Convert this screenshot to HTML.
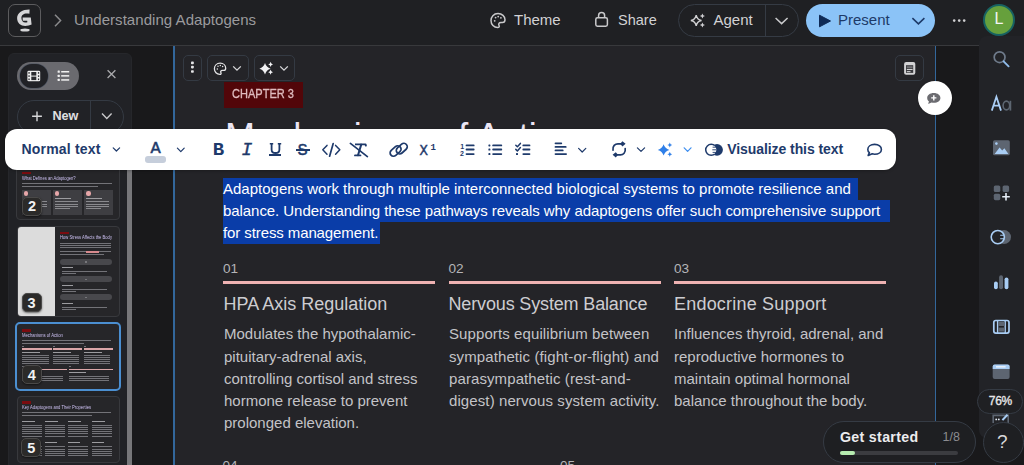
<!DOCTYPE html>
<html><head><meta charset="utf-8">
<style>
*{box-sizing:border-box;margin:0;padding:0}
html,body{width:1024px;height:465px;overflow:hidden;background:#19191b;font-family:"Liberation Sans",sans-serif}
.a{position:absolute}
svg{position:absolute;overflow:visible}
.t{white-space:nowrap;position:absolute}
</style></head><body>

<!-- top bar -->
<div class="a" style="left:0;top:0;width:1024px;height:46px;background:#1f2023"></div>
<div class="a" style="left:0;top:44.8px;width:1024px;height:1.4px;background:#38393c"></div>

<!-- logo -->
<div class="a" style="left:8px;top:4px;width:33px;height:33px;border:1.5px solid #5c5c5e;border-radius:7px"></div>
<svg style="left:0;top:0" width="60" height="45">
  <path d="M29.6 9.4 C23.2 9.2 17.1 12.2 17.1 18 C17.1 23.2 20.8 26 25.2 26 C27.6 26 29.8 25.4 31.6 24.6 L30.8 17.6 L22.6 17.6 L22.8 20.8 L27.2 20.8 L27.4 22.2 C26.8 22.4 26 22.5 25.2 22.5 C23 22.5 21.4 20.6 21.4 18 C21.4 15 23.6 13.4 26.6 13.4 C27.6 13.4 28.6 13.6 29.4 13.8 Z" fill="#d6d6d8"/>
  <ellipse cx="25" cy="30" rx="4.7" ry="1.5" fill="#d6d6d8"/>
  <path d="M55 14.8 L60.6 20.5 L55 26.2" stroke="#8a8a8c" stroke-width="1.5" fill="none"/>
</svg>
<div class="t" style="left:74px;top:11px;font-size:15px;color:#9b9b9e;letter-spacing:0.05px">Understanding Adaptogens</div>

<!-- Theme -->
<svg style="left:0;top:0" width="1024" height="45">
  <!-- palette -->
  <path d="M498 13.6 C493.6 13.6 491 16.8 491 20.6 C491 24.6 494 27.6 497.6 27.6 C499.2 27.6 499.6 26.6 499 25.4 C498.2 23.8 499.2 22.6 500.8 22.6 L502.4 22.6 C504.2 22.6 505 21.4 505 19.8 C505 16.2 502 13.6 498 13.6 Z" stroke="#c9c9cb" stroke-width="1.5" fill="none"/>
  <circle cx="494.7" cy="20.8" r="0.9" fill="#c9c9cb"/><circle cx="495.6" cy="17.6" r="0.9" fill="#c9c9cb"/>
  <circle cx="498.2" cy="16.6" r="0.9" fill="#c9c9cb"/><circle cx="500.9" cy="17.8" r="0.9" fill="#c9c9cb"/>
  <!-- lock -->
  <rect x="595.8" y="17.8" width="11.6" height="8.4" rx="1.6" stroke="#c9c9cb" stroke-width="1.5" fill="none"/>
  <path d="M598.6 17.8 V15.4 C598.6 13.6 599.8 12.6 601.6 12.6 C603.4 12.6 604.6 13.6 604.6 15.4 V17.8" stroke="#c9c9cb" stroke-width="1.5" fill="none"/>
  <!-- sparkle agent -->
  <path d="M696.2 15.2 Q697 19.7 701.5 20.5 Q697 21.3 696.2 25.8 Q695.4 21.3 690.9 20.5 Q695.4 19.7 696.2 15.2 Z" stroke="#d0d0d2" stroke-width="1.4" fill="none"/>
  <path d="M702.4 13.4 Q702.8 15.6 705 16 Q702.8 16.4 702.4 18.6 Q702 16.4 699.8 16 Q702 15.6 702.4 13.4 Z" fill="#d0d0d2"/>
  <path d="M702.4 22.4 Q702.8 24.6 705 25 Q702.8 25.4 702.4 27.6 Q702 25.4 699.8 25 Q702 24.6 702.4 22.4 Z" fill="#d0d0d2"/>
  <!-- agent chevron -->
  <path d="M775.6 18 L781.6 23.6 L787.6 18" stroke="#c9c9cb" stroke-width="1.5" fill="none"/>
</svg>
<div class="t" style="left:514px;top:11px;font-size:15px;color:#d2d2d4">Theme</div>
<div class="t" style="left:618px;top:11.6px;font-size:14.5px;color:#d2d2d4">Share</div>

<!-- Agent pill -->
<div class="a" style="left:678px;top:4px;width:121px;height:33px;border:1px solid #353b44;border-radius:17px"></div>
<div class="a" style="left:765px;top:5px;width:1px;height:31px;background:#353b44"></div>
<div class="t" style="left:713.5px;top:11px;font-size:15px;color:#d2d2d4">Agent</div>

<!-- Present -->
<div class="a" style="left:806px;top:4px;width:129px;height:33px;background:#8bc3f7;border-radius:17px"></div>
<svg style="left:0;top:0" width="1024" height="45">
  <path d="M819.5 15.2 L830.5 21 L819.5 26.8 Z" fill="#0f2a55" stroke="#0f2a55" stroke-width="1" stroke-linejoin="round"/>
  <path d="M912.4 18.2 L918.4 23.8 L924.4 18.2" stroke="#1d3a68" stroke-width="1.6" fill="none"/>
  <circle cx="954.2" cy="20.6" r="1.3" fill="#d0d0d2"/><circle cx="959.2" cy="20.6" r="1.3" fill="#d0d0d2"/><circle cx="964.2" cy="20.6" r="1.3" fill="#d0d0d2"/>
</svg>
<div class="t" style="left:838px;top:11px;font-size:15px;color:#1d3a68">Present</div>

<!-- avatar -->
<div class="a" style="left:983px;top:4px;width:32px;height:32px;border-radius:50%;background:#66a03c;border:2px solid #176262"></div>
<div class="t" style="left:994.4px;top:10.4px;font-size:16px;color:#f4f4f4">L</div>

<!-- right sidebar panel -->
<div class="a" style="left:979px;top:36px;width:60px;height:402px;background:#222327;border-radius:8px"></div>

<!-- left sidebar panel -->
<div class="a" style="left:8px;top:53px;width:124px;height:430px;background:#212226;border:1px solid #26272b;border-radius:6px"></div>


<!-- sidebar toggle -->
<div class="a" style="left:17px;top:62px;width:62px;height:28px;border-radius:14px;background:#6a6a6f"></div>
<div class="a" style="left:19.6px;top:64px;width:28.2px;height:24px;border-radius:12px;background:#212226;box-shadow:0 0 0 0.6px #4a5260"></div>
<svg style="left:0;top:0" width="140" height="140">
 <rect x="27.4" y="70.8" width="12.8" height="10.5" rx="1.3" fill="#f0f0f0"/>
 <rect x="31.3" y="72" width="5" height="3.6" fill="#2a2b2f"/>
 <rect x="31.3" y="76.6" width="5" height="3.5" fill="#2a2b2f"/>
 <rect x="28.4" y="72.1" width="1.3" height="1.6" fill="#2a2b2f"/><rect x="28.4" y="75.3" width="1.3" height="1.6" fill="#2a2b2f"/><rect x="28.4" y="78.5" width="1.3" height="1.6" fill="#2a2b2f"/>
 <rect x="37.9" y="72.1" width="1.3" height="1.6" fill="#2a2b2f"/><rect x="37.9" y="75.3" width="1.3" height="1.6" fill="#2a2b2f"/><rect x="37.9" y="78.5" width="1.3" height="1.6" fill="#2a2b2f"/>
 <rect x="57.6" y="70.6" width="2.2" height="2.2" rx="0.5" fill="#f0f0f0"/>
 <rect x="57.6" y="74.7" width="2.2" height="2.2" rx="0.5" fill="#f0f0f0"/>
 <rect x="57.6" y="78.8" width="2.2" height="2.2" rx="0.5" fill="#f0f0f0"/>
 <rect x="61.2" y="71" width="8" height="1.5" fill="#f0f0f0"/>
 <rect x="61.2" y="75.1" width="8" height="1.5" fill="#f0f0f0"/>
 <rect x="61.2" y="79.2" width="8" height="1.5" fill="#f0f0f0"/>
 <path d="M107.6 70.2 L115.4 78 M115.4 70.2 L107.6 78" stroke="#a9a9ac" stroke-width="1.3"/>
 <path d="M37 111.4 V121.2 M32.1 116.3 H41.9" stroke="#d8d8da" stroke-width="1.4"/>
 <path d="M102 113.6 L106.8 118.4 L111.6 113.6" stroke="#c9c9cb" stroke-width="1.4" fill="none"/>
</svg>
<div class="a" style="left:17px;top:100px;width:106.5px;height:34px;border:1px solid #343a43;border-radius:17px"></div>
<div class="a" style="left:90px;top:100px;width:1px;height:34px;background:#343a43"></div>
<div class="t" style="left:52.5px;top:108.6px;font-size:12.6px;font-weight:700;color:#e0e0e2">New</div>
<!-- thumbs start -->
<!-- scrollbar -->
<div class="a" style="left:126.6px;top:130px;width:5px;height:340px;background:#77777a"></div>
<div class="a" style="left:16.0px;top:164.0px;width:103.5px;height:55.5px;background:#262629;border:1px solid #38393d;border-radius:4px"></div>
<div class="a" style="left:16.5px;top:226.0px;width:103.0px;height:91.0px;background:#262629;border:1px solid #38393d;border-radius:4px"></div>
<div class="a" style="left:17.5px;top:227.0px;width:37.3px;height:89.0px;background:#dcdcdc;border-radius:3px 0 0 3px"></div>
<div class="a" style="left:15.2px;top:322.4px;width:105.7px;height:68.2px;background:#262629;border:2px solid #4b8fd1;border-radius:5px"></div>
<div class="a" style="left:16.5px;top:395.6px;width:103.2px;height:67.0px;background:#262629;border:1px solid #38393d;border-radius:4px"></div>
<div class="a" style="left:0;top:0;width:140px;height:465px;filter:blur(0.45px)">
<div class="a" style="left:22.0px;top:171.7px;width:9.0px;height:2.8px;background:#7a0c10;"></div>
<div class="t" style="left:22.4px;top:175px;font-size:5.9px;line-height:6.9px;color:#cbbff0;transform:scaleX(0.7);transform-origin:0 0;">What Defines an Adaptogen?</div>
<div class="a" style="left:22.4px;top:182.6px;width:89.6px;height:1.1px;background:#737378;"></div>
<div class="a" style="left:22.4px;top:185.6px;width:76.0px;height:1.1px;background:#737378;"></div>
<div class="a" style="left:22.0px;top:190.0px;width:29.0px;height:24.6px;background:#3e3e42;"></div>
<div class="a" style="left:24.2px;top:191.4px;width:4.2px;height:4.2px;background:#e6a6a8;border-radius:50%"></div>
<div class="a" style="left:24.0px;top:197.8px;width:16.0px;height:1.2px;background:#9c9ca0;"></div>
<div class="a" style="left:24.0px;top:201.4px;width:23.0px;height:0.9px;background:#8a8a8e;"></div>
<div class="a" style="left:24.0px;top:203.6px;width:23.0px;height:0.9px;background:#8a8a8e;"></div>
<div class="a" style="left:24.0px;top:205.8px;width:23.0px;height:0.9px;background:#8a8a8e;"></div>
<div class="a" style="left:24.0px;top:208.0px;width:15.0px;height:0.9px;background:#8a8a8e;"></div>
<div class="a" style="left:53.0px;top:190.0px;width:29.0px;height:24.6px;background:#3e3e42;"></div>
<div class="a" style="left:55.2px;top:191.4px;width:4.2px;height:4.2px;background:#e6a6a8;border-radius:50%"></div>
<div class="a" style="left:55.0px;top:197.8px;width:16.0px;height:1.2px;background:#9c9ca0;"></div>
<div class="a" style="left:55.0px;top:201.4px;width:23.0px;height:0.9px;background:#8a8a8e;"></div>
<div class="a" style="left:55.0px;top:203.6px;width:23.0px;height:0.9px;background:#8a8a8e;"></div>
<div class="a" style="left:55.0px;top:205.8px;width:23.0px;height:0.9px;background:#8a8a8e;"></div>
<div class="a" style="left:55.0px;top:208.0px;width:15.0px;height:0.9px;background:#8a8a8e;"></div>
<div class="a" style="left:84.2px;top:190.0px;width:29.0px;height:24.6px;background:#3e3e42;"></div>
<div class="a" style="left:86.4px;top:191.4px;width:4.2px;height:4.2px;background:#e6a6a8;border-radius:50%"></div>
<div class="a" style="left:86.2px;top:197.8px;width:16.0px;height:1.2px;background:#9c9ca0;"></div>
<div class="a" style="left:86.2px;top:201.4px;width:23.0px;height:0.9px;background:#8a8a8e;"></div>
<div class="a" style="left:86.2px;top:203.6px;width:23.0px;height:0.9px;background:#8a8a8e;"></div>
<div class="a" style="left:86.2px;top:205.8px;width:23.0px;height:0.9px;background:#8a8a8e;"></div>
<div class="a" style="left:86.2px;top:208.0px;width:15.0px;height:0.9px;background:#8a8a8e;"></div>
<div class="a" style="left:60.2px;top:231.8px;width:9.2px;height:2.4px;background:#7a0c10;"></div>
<div class="t" style="left:60.2px;top:234.2px;font-size:5.9px;line-height:6.9px;color:#cbbff0;transform:scaleX(0.7);transform-origin:0 0;">How Stress Affects the Body</div>
<div class="a" style="left:60.2px;top:242.6px;width:51.0px;height:1.0px;background:#737378;"></div>
<div class="a" style="left:60.2px;top:245.0px;width:51.0px;height:1.0px;background:#737378;"></div>
<div class="a" style="left:60.2px;top:247.4px;width:51.0px;height:1.0px;background:#737378;"></div>
<div class="a" style="left:60.2px;top:251.0px;width:51.0px;height:1.0px;background:#737378;"></div>
<div class="a" style="left:85.7px;top:250.5px;width:13.3px;height:2.0px;background:#d88a8e;"></div>
<div class="a" style="left:60.2px;top:253.6px;width:44.0px;height:1.0px;background:#737378;"></div>
<div class="a" style="left:60.0px;top:258.7px;width:52.0px;height:6.1px;background:#48484c;border-radius:3px"></div>
<div class="a" style="left:84.5px;top:261.0px;width:2.5px;height:1.5px;background:#77777b;"></div>
<div class="a" style="left:61.5px;top:266.8px;width:11.0px;height:1.2px;background:#9c9ca0;"></div>
<div class="a" style="left:61.5px;top:270.8px;width:45.0px;height:0.9px;background:#737378;"></div>
<div class="a" style="left:61.5px;top:273.0px;width:14.0px;height:0.9px;background:#737378;"></div>
<div class="a" style="left:60.0px;top:276.4px;width:52.0px;height:6.1px;background:#48484c;border-radius:3px"></div>
<div class="a" style="left:84.5px;top:278.7px;width:2.5px;height:1.5px;background:#77777b;"></div>
<div class="a" style="left:61.5px;top:284.6px;width:11.0px;height:1.2px;background:#9c9ca0;"></div>
<div class="a" style="left:61.5px;top:288.6px;width:45.0px;height:0.9px;background:#737378;"></div>
<div class="a" style="left:61.5px;top:290.8px;width:14.0px;height:0.9px;background:#737378;"></div>
<div class="a" style="left:60.0px;top:294.4px;width:52.0px;height:6.1px;background:#48484c;border-radius:3px"></div>
<div class="a" style="left:84.5px;top:296.7px;width:2.5px;height:1.5px;background:#77777b;"></div>
<div class="a" style="left:61.5px;top:302.6px;width:11.0px;height:1.2px;background:#9c9ca0;"></div>
<div class="a" style="left:61.5px;top:306.6px;width:45.0px;height:0.9px;background:#737378;"></div>
<div class="a" style="left:61.5px;top:308.8px;width:14.0px;height:0.9px;background:#737378;"></div>
<div class="a" style="left:22.0px;top:328.9px;width:9.4px;height:2.8px;background:#7a0c10;"></div>
<div class="t" style="left:22px;top:332px;font-size:6px;line-height:7px;color:#cbbff0;transform:scaleX(0.7);transform-origin:0 0;">Mechanisms of Action</div>
<div class="a" style="left:22.0px;top:340.4px;width:89.0px;height:1.0px;background:#737378;"></div>
<div class="a" style="left:22.0px;top:343.2px;width:62.0px;height:1.0px;background:#737378;"></div>
<div class="a" style="left:22.0px;top:346.2px;width:2.0px;height:0.9px;background:#737378;"></div>
<div class="a" style="left:22.0px;top:348.3px;width:29.5px;height:1.5px;background:#dba6a8;"></div>
<div class="a" style="left:22.0px;top:351.6px;width:18.3px;height:1.1px;background:#9c9ca0;"></div>
<div class="a" style="left:22.0px;top:354.8px;width:26.5px;height:0.9px;background:#737378;"></div>
<div class="a" style="left:22.0px;top:357.0px;width:26.5px;height:0.9px;background:#737378;"></div>
<div class="a" style="left:22.0px;top:359.2px;width:26.5px;height:0.9px;background:#737378;"></div>
<div class="a" style="left:22.0px;top:361.4px;width:26.5px;height:0.9px;background:#737378;"></div>
<div class="a" style="left:22.0px;top:363.4px;width:26.5px;height:0.9px;background:#737378;"></div>
<div class="a" style="left:53.1px;top:346.2px;width:2.0px;height:0.9px;background:#737378;"></div>
<div class="a" style="left:53.1px;top:348.3px;width:29.1px;height:1.5px;background:#dba6a8;"></div>
<div class="a" style="left:53.1px;top:351.6px;width:18.0px;height:1.1px;background:#9c9ca0;"></div>
<div class="a" style="left:53.1px;top:354.8px;width:26.1px;height:0.9px;background:#737378;"></div>
<div class="a" style="left:53.1px;top:357.0px;width:26.1px;height:0.9px;background:#737378;"></div>
<div class="a" style="left:53.1px;top:359.2px;width:26.1px;height:0.9px;background:#737378;"></div>
<div class="a" style="left:53.1px;top:361.4px;width:26.1px;height:0.9px;background:#737378;"></div>
<div class="a" style="left:53.1px;top:363.4px;width:26.1px;height:0.9px;background:#737378;"></div>
<div class="a" style="left:83.8px;top:346.2px;width:2.0px;height:0.9px;background:#737378;"></div>
<div class="a" style="left:83.8px;top:348.3px;width:29.0px;height:1.5px;background:#dba6a8;"></div>
<div class="a" style="left:83.8px;top:351.6px;width:18.0px;height:1.1px;background:#9c9ca0;"></div>
<div class="a" style="left:83.8px;top:354.8px;width:26.0px;height:0.9px;background:#737378;"></div>
<div class="a" style="left:83.8px;top:357.0px;width:26.0px;height:0.9px;background:#737378;"></div>
<div class="a" style="left:83.8px;top:359.2px;width:26.0px;height:0.9px;background:#737378;"></div>
<div class="a" style="left:83.8px;top:361.4px;width:26.0px;height:0.9px;background:#737378;"></div>
<div class="a" style="left:83.8px;top:363.4px;width:26.0px;height:0.9px;background:#737378;"></div>
<div class="a" style="left:22.0px;top:366.4px;width:2.0px;height:0.9px;background:#737378;"></div>
<div class="a" style="left:22.0px;top:368.5px;width:44.8px;height:1.5px;background:#dba6a8;"></div>
<div class="a" style="left:22.0px;top:372.0px;width:17.9px;height:1.1px;background:#9c9ca0;"></div>
<div class="a" style="left:22.0px;top:375.6px;width:40.8px;height:0.9px;background:#737378;"></div>
<div class="a" style="left:22.0px;top:377.8px;width:40.8px;height:0.9px;background:#737378;"></div>
<div class="a" style="left:22.0px;top:380.0px;width:40.8px;height:0.9px;background:#737378;"></div>
<div class="a" style="left:68.5px;top:366.4px;width:2.0px;height:0.9px;background:#737378;"></div>
<div class="a" style="left:68.5px;top:368.5px;width:44.3px;height:1.5px;background:#dba6a8;"></div>
<div class="a" style="left:68.5px;top:372.0px;width:17.7px;height:1.1px;background:#9c9ca0;"></div>
<div class="a" style="left:68.5px;top:375.6px;width:40.3px;height:0.9px;background:#737378;"></div>
<div class="a" style="left:68.5px;top:377.8px;width:40.3px;height:0.9px;background:#737378;"></div>
<div class="a" style="left:68.5px;top:380.0px;width:40.3px;height:0.9px;background:#737378;"></div>
<div class="a" style="left:22.0px;top:401.0px;width:9.4px;height:2.7px;background:#7a0c10;"></div>
<div class="t" style="left:22px;top:404px;font-size:6px;line-height:7px;color:#cbbff0;transform:scaleX(0.693);transform-origin:0 0;">Key Adaptogens and Their Properties</div>
<div class="a" style="left:22.0px;top:412.4px;width:89.0px;height:1.0px;background:#737378;"></div>
<div class="a" style="left:22.0px;top:415.0px;width:70.0px;height:1.0px;background:#737378;"></div>
<div class="a" style="left:22.0px;top:421.0px;width:13.0px;height:1.2px;background:#9c9ca0;"></div>
<div class="a" style="left:22.0px;top:424.6px;width:20.0px;height:0.9px;background:#737378;"></div>
<div class="a" style="left:22.0px;top:426.8px;width:20.0px;height:0.9px;background:#737378;"></div>
<div class="a" style="left:22.0px;top:429.0px;width:20.0px;height:0.9px;background:#737378;"></div>
<div class="a" style="left:22.0px;top:431.2px;width:20.0px;height:0.9px;background:#737378;"></div>
<div class="a" style="left:22.0px;top:433.4px;width:20.0px;height:0.9px;background:#737378;"></div>
<div class="a" style="left:22.0px;top:435.6px;width:20.0px;height:0.9px;background:#737378;"></div>
<div class="a" style="left:22.0px;top:442.0px;width:12.0px;height:1.2px;background:#9c9ca0;"></div>
<div class="a" style="left:22.0px;top:446.4px;width:20.0px;height:0.9px;background:#737378;"></div>
<div class="a" style="left:22.0px;top:448.6px;width:20.0px;height:0.9px;background:#737378;"></div>
<div class="a" style="left:22.0px;top:450.8px;width:20.0px;height:0.9px;background:#737378;"></div>
<div class="a" style="left:22.0px;top:453.0px;width:20.0px;height:0.9px;background:#737378;"></div>
<div class="a" style="left:22.0px;top:455.2px;width:20.0px;height:0.9px;background:#737378;"></div>
<div class="a" style="left:45.0px;top:421.0px;width:13.0px;height:1.2px;background:#9c9ca0;"></div>
<div class="a" style="left:45.0px;top:424.6px;width:20.0px;height:0.9px;background:#737378;"></div>
<div class="a" style="left:45.0px;top:426.8px;width:20.0px;height:0.9px;background:#737378;"></div>
<div class="a" style="left:45.0px;top:429.0px;width:20.0px;height:0.9px;background:#737378;"></div>
<div class="a" style="left:45.0px;top:431.2px;width:20.0px;height:0.9px;background:#737378;"></div>
<div class="a" style="left:45.0px;top:433.4px;width:20.0px;height:0.9px;background:#737378;"></div>
<div class="a" style="left:45.0px;top:435.6px;width:20.0px;height:0.9px;background:#737378;"></div>
<div class="a" style="left:45.0px;top:442.0px;width:12.0px;height:1.2px;background:#9c9ca0;"></div>
<div class="a" style="left:45.0px;top:446.4px;width:20.0px;height:0.9px;background:#737378;"></div>
<div class="a" style="left:45.0px;top:448.6px;width:20.0px;height:0.9px;background:#737378;"></div>
<div class="a" style="left:45.0px;top:450.8px;width:20.0px;height:0.9px;background:#737378;"></div>
<div class="a" style="left:45.0px;top:453.0px;width:20.0px;height:0.9px;background:#737378;"></div>
<div class="a" style="left:45.0px;top:455.2px;width:20.0px;height:0.9px;background:#737378;"></div>
<div class="a" style="left:68.1px;top:421.0px;width:13.0px;height:1.2px;background:#9c9ca0;"></div>
<div class="a" style="left:68.1px;top:424.6px;width:20.0px;height:0.9px;background:#737378;"></div>
<div class="a" style="left:68.1px;top:426.8px;width:20.0px;height:0.9px;background:#737378;"></div>
<div class="a" style="left:68.1px;top:429.0px;width:20.0px;height:0.9px;background:#737378;"></div>
<div class="a" style="left:68.1px;top:431.2px;width:20.0px;height:0.9px;background:#737378;"></div>
<div class="a" style="left:68.1px;top:433.4px;width:20.0px;height:0.9px;background:#737378;"></div>
<div class="a" style="left:68.1px;top:435.6px;width:20.0px;height:0.9px;background:#737378;"></div>
<div class="a" style="left:68.1px;top:442.0px;width:12.0px;height:1.2px;background:#9c9ca0;"></div>
<div class="a" style="left:68.1px;top:446.4px;width:20.0px;height:0.9px;background:#737378;"></div>
<div class="a" style="left:68.1px;top:448.6px;width:20.0px;height:0.9px;background:#737378;"></div>
<div class="a" style="left:68.1px;top:450.8px;width:20.0px;height:0.9px;background:#737378;"></div>
<div class="a" style="left:68.1px;top:453.0px;width:20.0px;height:0.9px;background:#737378;"></div>
<div class="a" style="left:68.1px;top:455.2px;width:20.0px;height:0.9px;background:#737378;"></div>
<div class="a" style="left:91.5px;top:421.0px;width:13.0px;height:1.2px;background:#9c9ca0;"></div>
<div class="a" style="left:91.5px;top:424.6px;width:20.0px;height:0.9px;background:#737378;"></div>
<div class="a" style="left:91.5px;top:426.8px;width:20.0px;height:0.9px;background:#737378;"></div>
<div class="a" style="left:91.5px;top:429.0px;width:20.0px;height:0.9px;background:#737378;"></div>
<div class="a" style="left:91.5px;top:431.2px;width:20.0px;height:0.9px;background:#737378;"></div>
<div class="a" style="left:91.5px;top:433.4px;width:20.0px;height:0.9px;background:#737378;"></div>
<div class="a" style="left:91.5px;top:435.6px;width:20.0px;height:0.9px;background:#737378;"></div>
<div class="a" style="left:91.5px;top:442.0px;width:12.0px;height:1.2px;background:#9c9ca0;"></div>
<div class="a" style="left:91.5px;top:446.4px;width:20.0px;height:0.9px;background:#737378;"></div>
<div class="a" style="left:91.5px;top:448.6px;width:20.0px;height:0.9px;background:#737378;"></div>
<div class="a" style="left:91.5px;top:450.8px;width:20.0px;height:0.9px;background:#737378;"></div>
<div class="a" style="left:91.5px;top:453.0px;width:20.0px;height:0.9px;background:#737378;"></div>
<div class="a" style="left:91.5px;top:455.2px;width:20.0px;height:0.9px;background:#737378;"></div>
</div>
<div class="a" style="left:22px;top:196.5px;width:20px;height:19px;background:#2b2a29;border:1px solid #4a4948;border-radius:5px;box-shadow:0 1px 2px rgba(0,0,0,0.5)"></div>
<div class="t" style="left:22px;top:198.0px;width:20px;text-align:center;font-size:14.5px;font-weight:700;line-height:16px;color:#f2f2f2">2</div>
<div class="a" style="left:21.5px;top:293px;width:20px;height:19px;background:#2b2a29;border:1px solid #4a4948;border-radius:5px;box-shadow:0 1px 2px rgba(0,0,0,0.5)"></div>
<div class="t" style="left:21.5px;top:294.5px;width:20px;text-align:center;font-size:14.5px;font-weight:700;line-height:16px;color:#f2f2f2">3</div>
<div class="a" style="left:21.7px;top:365px;width:20px;height:19px;background:#2b2a29;border:1px solid #4a4948;border-radius:5px;box-shadow:0 1px 2px rgba(0,0,0,0.5)"></div>
<div class="t" style="left:21.7px;top:366.5px;width:20px;text-align:center;font-size:14.5px;font-weight:700;line-height:16px;color:#f2f2f2">4</div>
<div class="a" style="left:21.4px;top:438.4px;width:20px;height:19px;background:#2b2a29;border:1px solid #4a4948;border-radius:5px;box-shadow:0 1px 2px rgba(0,0,0,0.5)"></div>
<div class="t" style="left:21.4px;top:439.9px;width:20px;text-align:center;font-size:14.5px;font-weight:700;line-height:16px;color:#f2f2f2">5</div>
<!-- card -->
<div class="a" style="left:173px;top:46px;width:763px;height:430px;background:#242428;border-left:2px solid #33679b;border-right:1.5px solid #33679b"></div>


<!-- card top buttons -->
<div class="a" style="left:183px;top:55px;width:19px;height:26px;border:1px solid #343a43;border-radius:5px"></div>
<div class="a" style="left:207px;top:55px;width:41.5px;height:26px;border:1px solid #343a43;border-radius:5px"></div>
<div class="a" style="left:254px;top:55px;width:41px;height:26px;border:1px solid #343a43;border-radius:5px"></div>
<div class="a" style="left:895.3px;top:55.3px;width:29.2px;height:25.8px;border:1px solid #343a43;border-radius:5px"></div>
<svg style="left:0;top:0" width="1024" height="120">
  <rect x="191" y="61.6" width="2.8" height="2.6" rx="0.8" fill="#e4e4e6"/>
  <rect x="191" y="65.8" width="2.8" height="2.6" rx="0.8" fill="#e4e4e6"/>
  <rect x="191" y="70.2" width="2.8" height="2.6" rx="0.8" fill="#e4e4e6"/>
  <path d="M220.2 63.2 C216.6 63.2 214.4 65.8 214.4 68.8 C214.4 72 216.8 74.4 219.8 74.4 C221 74.4 221.4 73.6 220.9 72.6 C220.2 71.3 221 70.4 222.3 70.4 L223.6 70.4 C225 70.4 225.7 69.4 225.7 68.2 C225.7 65.3 223.3 63.2 220.2 63.2 Z" stroke="#e4e4e6" stroke-width="1.3" fill="none"/>
  <circle cx="217.3" cy="68.9" r="0.75" fill="#e4e4e6"/><circle cx="218" cy="66.3" r="0.75" fill="#e4e4e6"/>
  <circle cx="220.3" cy="65.5" r="0.75" fill="#e4e4e6"/><circle cx="222.6" cy="66.4" r="0.75" fill="#e4e4e6"/>
  <path d="M233.2 66.4 L237 70.2 L240.8 66.4" stroke="#d8d8da" stroke-width="1.3" fill="none"/>
  <path d="M265 63 Q266.3 67.4 270.6 68.7 Q266.3 70 265 74.4 Q263.7 70 259.4 68.7 Q263.7 67.4 265 63 Z" fill="#f2f2f4"/>
  <path d="M270.6 61.8 Q270.9 64.1 273 64.4 Q270.9 64.7 270.6 67 Q270.3 64.7 268.2 64.4 Q270.3 64.1 270.6 61.8 Z" fill="#f2f2f4"/>
  <path d="M270.6 69.6 Q270.9 71.9 273 72.2 Q270.9 72.5 270.6 74.8 Q270.3 72.5 268.2 72.2 Q270.3 71.9 270.6 69.6 Z" fill="#f2f2f4"/>
  <path d="M280.2 66.4 L284 70.2 L287.8 66.4" stroke="#d8d8da" stroke-width="1.3" fill="none"/>
  <!-- notes icon -->
  <rect x="904.1" y="62.1" width="11.2" height="12.7" rx="2" fill="#d2d2d4"/>
  <rect x="906" y="65.2" width="7.2" height="7.7" fill="#3a3a3e"/>
  <rect x="906.8" y="66.5" width="5.8" height="1.2" fill="#8c8c90"/>
  <rect x="906.8" y="68.9" width="5.8" height="1.1" fill="#d2d2d4"/>
  <rect x="906.8" y="71.1" width="3.7" height="1.1" fill="#d2d2d4"/>
</svg>

<!-- chapter tag -->
<div class="a" style="left:223.5px;top:81.5px;width:79px;height:26px;background:#520609"></div>
<div class="t" style="left:232px;top:87.4px;font-size:12.2px;letter-spacing:0px;color:#dfbcbf;-webkit-text-stroke:0.32px #dfbcbf;transform:scaleX(0.905);transform-origin:0 0">CHAPTER 3</div>

<!-- title -->
<div class="t" style="left:225px;top:116.4px;font-size:36px;letter-spacing:0.1px;color:#ece6f4">Mechanisms of Action</div>

<!-- comment bubble -->
<div class="a" style="left:917.5px;top:81px;width:34px;height:34px;border-radius:50%;background:#ffffff;box-shadow:0 0 2px rgba(0,0,0,0.3)"></div>
<svg style="left:0;top:0" width="1024" height="120">
  <path d="M933.8 93 C929.8 93 927.2 95.2 927.2 97.9 C927.2 99.3 927.8 100.5 928.9 101.3 L928.2 104 L931.6 102.5 C932.3 102.7 933 102.8 933.8 102.8 C937.8 102.8 940.4 100.6 940.4 97.9 C940.4 95.2 937.8 93 933.8 93 Z" fill="#6b6b70"/>
  <path d="M933.8 95.3 V100.5 M931.2 97.9 H936.4" stroke="#ffffff" stroke-width="1.4"/>
</svg>

<!-- paragraph with selection -->
<div class="a" style="left:223px;top:178px;font-size:15px;line-height:22px;color:#ffffff;white-space:nowrap">
<div><span style="display:inline-block;background:#0a3da8;padding-right:7.5px">Adaptogens work through multiple interconnected biological systems to promote resilience and</span></div>
<div><span style="display:inline-block;background:#0a3da8;padding-right:10px;letter-spacing:-0.06px">balance. Understanding these pathways reveals why adaptogens offer such comprehensive support</span></div>
<div><span style="display:inline-block;background:#0a3da8;padding-right:2px;letter-spacing:-0.1px">for stress management.</span></div>
</div>

<!-- columns -->
<div class="t" style="left:223px;top:261px;font-size:13.6px;line-height:16px;color:#b4b4b8">01</div>
<div class="t" style="left:448.5px;top:261px;font-size:13.6px;line-height:16px;color:#b4b4b8">02</div>
<div class="t" style="left:674px;top:261px;font-size:13.6px;line-height:16px;color:#b4b4b8">03</div>
<div class="a" style="left:223px;top:281px;width:212px;height:2.5px;background:#eeb2b2"></div>
<div class="a" style="left:448.5px;top:281px;width:212px;height:2.5px;background:#eeb2b2"></div>
<div class="a" style="left:674px;top:281px;width:212px;height:2.5px;background:#eeb2b2"></div>

<div class="t" style="left:223.5px;top:292.5px;font-size:18px;line-height:22px;color:#cdcdd1">HPA Axis Regulation</div>
<div class="t" style="left:448.5px;top:292.5px;font-size:18px;line-height:22px;color:#cdcdd1;letter-spacing:-0.15px">Nervous System Balance</div>
<div class="t" style="left:674px;top:292.5px;font-size:18px;line-height:22px;color:#cdcdd1;letter-spacing:0.2px">Endocrine Support</div>

<div class="t" style="left:224px;top:323.4px;font-size:15px;line-height:22.15px;color:#c3c3c7">Modulates the hypothalamic-<br>pituitary-adrenal axis,<br>controlling cortisol and stress<br>hormone release to prevent<br>prolonged elevation.</div>
<div class="t" style="left:449px;top:323.4px;font-size:15px;line-height:22.15px;color:#c3c3c7;letter-spacing:0.1px">Supports equilibrium between<br>sympathetic (fight-or-flight) and<br>parasympathetic (rest-and-<br>digest) nervous system activity.</div>
<div class="t" style="left:674px;top:323.4px;font-size:15px;line-height:22.15px;color:#c3c3c7">Influences thyroid, adrenal, and<br>reproductive hormones to<br>maintain optimal hormonal<br>balance throughout the body.</div>

<div class="t" style="left:222.5px;top:458.2px;font-size:13.6px;line-height:16px;color:#b4b4b8">04</div>
<div class="t" style="left:560px;top:458.2px;font-size:13.6px;line-height:16px;color:#b4b4b8">05</div>


<!-- floating toolbar -->
<div class="a" style="left:5px;top:129.2px;width:891px;height:40.8px;background:#ffffff;border-radius:12px;box-shadow:0 1px 3px rgba(0,0,0,0.25)"></div>
<div class="t" style="left:21.5px;top:141px;font-size:14px;font-weight:700;letter-spacing:0.18px;color:#1e3a6b">Normal text</div>
<div class="t" style="left:150.5px;top:138.6px;font-size:17px;font-family:'Liberation Mono',monospace;-webkit-text-stroke:0.5px #1e3a6b;color:#1e3a6b">A</div>
<div class="a" style="left:145px;top:156.3px;width:21px;height:6.5px;border-radius:3px;background:#c6cedb"></div>
<div class="t" style="left:212.8px;top:139px;font-size:19px;font-weight:700;font-family:'Liberation Mono',monospace;color:#1e3a6b">B</div>
<div class="t" style="left:241.5px;top:140.3px;font-size:18px;font-style:italic;font-family:'Liberation Mono',monospace;-webkit-text-stroke:0.4px #1e3a6b;color:#1e3a6b">I</div>

<div class="a" style="left:269.4px;top:154.4px;width:12px;height:1.7px;background:#1e3a6b"></div>
<div class="t" style="left:297.5px;top:141px;font-size:17px;font-family:'Liberation Mono',monospace;-webkit-text-stroke:0.4px #1e3a6b;color:#1e3a6b">S</div>
<div class="a" style="left:296px;top:149.2px;width:14px;height:1.7px;background:#1e3a6b"></div>

<div class="t" style="left:419.6px;top:143.2px;font-size:14px;font-family:'Liberation Mono',monospace;-webkit-text-stroke:0.4px #1e3a6b;color:#1e3a6b">X</div>
<div class="t" style="left:430.4px;top:142.5px;font-size:9px;font-weight:700;font-family:'Liberation Mono',monospace;color:#1e3a6b">1</div>
<div class="t" style="left:727.3px;top:141px;font-size:14px;font-weight:700;letter-spacing:-0.08px;color:#1e3a6b">Visualize this text</div>
<svg style="left:0;top:0" width="1024" height="200">
 <g stroke="#1e3a6b" stroke-width="1.5" fill="none" stroke-linecap="round" stroke-linejoin="round">
  <path d="M113.2 147.8 L116.4 151 L119.6 147.8" stroke-width="1.2"/>
  <path d="M177.4 148.2 L180.8 151.6 L184.2 148.2" stroke-width="1.2"/>
  <!-- code -->
  <path d="M327 145.4 L322.8 149.8 L327 154.2"/>
  <path d="M335.6 145.4 L339.8 149.8 L335.6 154.2"/>
  <path d="M333.2 143.6 L329.6 156.2" stroke-width="1.7"/>
  <!-- clear format slash -->
  <path d="M350.4 143.4 L367.4 156.6" stroke-width="1.7"/>
  <!-- U -->
  <path d="M271.6 143.8 V149.4 C271.6 151.8 273.2 153 275.5 153 C277.8 153 279.4 151.8 279.4 149.4 V143.8" stroke-width="1.8"/>
  <path d="M269.8 143.8 H273.2 M277.8 143.8 H281.2" stroke-width="1.5" stroke-linecap="butt"/>
  <!-- link -->
  <rect x="-6.2" y="-3.4" width="12.4" height="6.8" rx="3.4" transform="translate(395.6,151) rotate(-42)" stroke-width="1.7"/>
  <rect x="-6.2" y="-3.4" width="12.4" height="6.8" rx="3.4" transform="translate(401.8,148.6) rotate(-42)" stroke-width="1.7"/>
  <!-- T clear -->
  <path d="M355 144.4 H365.6 L366 146.4" stroke-width="1.9" stroke-linecap="butt"/>
  <path d="M361.2 144.6 L358 155.2" stroke-width="2"/>
  <path d="M355 155.4 H360.4" stroke-width="1.9"/>
  <!-- align chevron etc -->
  <path d="M578.6 148.4 L582.2 152 L585.8 148.4" stroke-width="1.2"/>
  <path d="M637.4 147.8 L641 151.4 L644.6 147.8" stroke-width="1.2"/>
  <path d="M684.2 147.8 L687.6 151.4 L691 147.8" stroke="#3d8ef0" stroke-width="1.2"/>
  <!-- sync -->
  <path d="M613 150.2 C612.4 146.2 615 143.6 618.4 143.8 L623.6 143.8" stroke-width="1.7"/>
  <path d="M625.2 148.6 C625.8 152.4 623.4 155 620 154.8 L614.6 154.8" stroke-width="1.7"/>
  <!-- comment -->
  <path d="M874.6 144.4 C878.8 144.4 881.4 146.8 881.4 149.4 C881.4 152.2 878.6 154.2 874.6 154.2 C873.8 154.2 873 154.1 872.2 153.8 L868.2 155.4 L869.4 152.6 C868.4 151.8 867.8 150.6 867.8 149.4 C867.8 146.6 870.6 144.4 874.6 144.4 Z" stroke-width="1.6"/>
 </g>
 <!-- sync arrowheads -->
 <path d="M622.4 141.2 L625.6 143.8 L622.4 146.4 L620.2 143.8 Z" fill="#1e3a6b"/>
 <path d="M615.8 152.2 L612.6 154.8 L615.8 157.4 L618 154.8 Z" fill="#1e3a6b"/>
 <!-- lists -->
 <g fill="#1e3a6b">
  <rect x="465.6" y="144.5" width="9" height="1.8" rx="0.9"/>
  <rect x="465.6" y="148.6" width="9" height="1.8" rx="0.9"/>
  <rect x="465.6" y="153.2" width="9" height="1.8" rx="0.9"/>
  <rect x="492.2" y="144.5" width="10" height="1.8" rx="0.9"/>
  <rect x="492.2" y="148.6" width="10" height="1.8" rx="0.9"/>
  <rect x="492.2" y="153.2" width="10" height="1.8" rx="0.9"/>
  <rect x="488.4" y="144.4" width="2" height="2" rx="0.6"/>
  <rect x="488.4" y="148.5" width="2" height="2" rx="0.6"/>
  <rect x="488.4" y="153.1" width="2" height="2" rx="0.6"/>
  <rect x="522.4" y="144.5" width="8" height="1.8" rx="0.9"/>
  <rect x="522.4" y="148.6" width="8" height="1.8" rx="0.9"/>
  <rect x="522.4" y="153.2" width="8" height="1.8" rx="0.9"/>
  <rect x="516" y="153.1" width="2" height="2" rx="0.6"/>
  <rect x="554.6" y="142.4" width="7.6" height="1.8" rx="0.9"/>
  <rect x="554.6" y="146" width="12" height="1.8" rx="0.9"/>
  <rect x="554.6" y="149.5" width="9" height="1.8" rx="0.9"/>
  <rect x="554.6" y="153.2" width="12.4" height="1.8" rx="0.9"/>
 </g>
 <text x="460.2" y="149" font-family="Liberation Sans" font-weight="700" font-size="7" fill="#1e3a6b">1</text>
 <text x="460" y="155.8" font-family="Liberation Sans" font-weight="700" font-size="7" fill="#1e3a6b">2</text>
 <g stroke="#1e3a6b" stroke-width="1.5" fill="none" stroke-linecap="round" stroke-linejoin="round">
  <path d="M515.8 145.2 L517.4 146.8 L520.4 143.4"/>
  <path d="M515.8 149.4 L517.4 151 L520.4 147.6"/>
 </g>
 <!-- sparkle blue -->
 <path d="M663.6 144.2 Q664.9 148.6 669.4 149.9 Q664.9 151.2 663.6 155.6 Q662.3 151.2 657.8 149.9 Q662.3 148.6 663.6 144.2 Z" fill="#2f7fe8"/>
 <path d="M669.8 142.4 Q670.1 144.6 672.2 144.9 Q670.1 145.2 669.8 147.4 Q669.5 145.2 667.4 144.9 Q669.5 144.6 669.8 142.4 Z" fill="#2f7fe8"/>
 <path d="M669.8 151.8 Q670.1 154 672.2 154.3 Q670.1 154.6 669.8 156.8 Q669.5 154.6 667.4 154.3 Q669.5 154 669.8 151.8 Z" fill="#2f7fe8"/>
 <!-- visualize toggle -->
 <circle cx="717" cy="149.8" r="5.9" fill="#1e3a6b"/>
 <circle cx="711.2" cy="149.8" r="5.5" fill="#ffffff" stroke="#1e3a6b" stroke-width="1.5"/>
 <path d="M714.2 145.4 A5.5 5.5 0 0 1 714.2 154.2 Z" fill="#ffffff"/>
 <g stroke="#1e3a6b" stroke-width="0.9"><path d="M712.6 147.2 H716 M712.3 149.8 H716.3 M712.6 152.4 H716"/></g>
</svg>


<!-- right sidebar icons -->
<svg style="left:0;top:0" width="1024" height="465">
 <circle cx="999.6" cy="57.2" r="5.4" fill="none" stroke="#6f7b8b" stroke-width="1.7"/>
 <path d="M1003.6 61.3 L1008.6 66.3" stroke="#8fbbe9" stroke-width="1.9" stroke-linecap="round"/>
 <path d="M991.8 110.6 L996.4 96.8 L1001 110.6 M993.4 105.6 H999.4" stroke="#a9cdf4" stroke-width="1.8" fill="none"/>
 <ellipse cx="1006.4" cy="105.5" rx="3.3" ry="4.4" stroke="#5d6671" stroke-width="1.6" fill="none"/><path d="M1010.4 100.8 V110.6" stroke="#5d6671" stroke-width="1.7"/>
 <rect x="993" y="140.3" width="16.8" height="15" rx="1.6" fill="#5d6571"/>
 <path d="M994.6 154 L999.6 147.6 L1002.2 150.4 L1004.4 148.2 L1008.4 154 Z" fill="#a9cdf4"/>
 <circle cx="996.4" cy="143.6" r="1.3" fill="#a9cdf4"/>
 <rect x="993.8" y="185.5" width="6.5" height="6.5" rx="1.6" fill="#5d6571"/>
 <rect x="1002.6" y="185.5" width="6.5" height="6.5" rx="1.6" fill="#5d6571"/>
 <rect x="993.8" y="193.7" width="6.5" height="6.5" rx="1.6" fill="#5d6571"/>
 <path d="M1006 193 V200.6 M1002.2 196.8 H1009.8" stroke="#e6eef8" stroke-width="1.6"/>
 <circle cx="1004" cy="237.1" r="7" fill="#5d6571"/>
 <circle cx="997.8" cy="237.1" r="6.6" fill="#222327" stroke="#a9cdf4" stroke-width="1.6"/>
 <path d="M1000.2 235.2 H1004.2 M1000.2 238.8 H1004.2" stroke="#a9cdf4" stroke-width="1.1"/>
 <rect x="994" y="281.4" width="3.8" height="7.8" rx="1.9" fill="#a9cdf4"/>
 <rect x="999.1" y="275.3" width="3.9" height="13.9" rx="1.9" fill="#5d6571"/>
 <rect x="1004.6" y="277.4" width="3.8" height="11.8" rx="1.9" fill="#a9cdf4"/>
 <rect x="993.8" y="320.5" width="15.2" height="12.6" rx="2" fill="none" stroke="#a9cdf4" stroke-width="1.7"/>
 <path d="M997.6 320.5 V333.1 M1005.2 320.5 V333.1" stroke="#a9cdf4" stroke-width="1.4"/>
 <rect x="998.2" y="322" width="6.4" height="4" fill="#5d6571"/>
 <rect x="998.2" y="327.6" width="6.4" height="4" fill="#5d6571"/>
 <rect x="992.7" y="364.6" width="16.9" height="14.3" rx="2" fill="#5d6571"/>
 <path d="M992.7 369 V366.6 A2 2 0 0 1 994.7 364.6 H1007.6 A2 2 0 0 1 1009.6 366.6 V369 Z" fill="#a9cdf4"/>
 <rect x="996" y="366.2" width="9.6" height="1.3" fill="#f4f8fc"/>
 <path d="M993.2 423 V415.4 H1008.2 V423" fill="none" stroke="#5d6571" stroke-width="1.6"/>
 <path d="M1001.6 419.6 L1006.8 414 L1008.2 415.6 L1003.2 420.8 Z" fill="#a9cdf4"/>
 <circle cx="996.2" cy="419.4" r="0.9" fill="#e6eef8"/><circle cx="998.8" cy="419.4" r="0.9" fill="#e6eef8"/>
</svg>
<div class="a" style="left:977.4px;top:389.2px;width:46px;height:24.5px;border-radius:12.25px;background:#1f2023;border:1px solid #353b44"></div>
<div class="t" style="left:977.4px;top:393.6px;width:46px;text-align:center;font-size:12px;line-height:15px;letter-spacing:-0.2px;color:#e6e6e8;-webkit-text-stroke:0.35px #e6e6e8">76%</div>

<!-- help -->
<div class="a" style="left:983px;top:421.6px;width:41px;height:41px;border-radius:50%;background:#1e1f22;border:1px solid #353b44"></div>
<div class="t" style="left:997px;top:431px;font-size:19px;line-height:22px;color:#d8d8da">?</div>

<!-- get started -->
<div class="a" style="left:823px;top:421px;width:153px;height:41.5px;border-radius:21px;background:#1e1f22;border:1px solid #353b44"></div>
<div class="t" style="left:840px;top:428.5px;font-size:14.2px;font-weight:700;line-height:17px;letter-spacing:0.32px;color:#ececee">Get started</div>
<div class="t" style="left:942.5px;top:429.5px;font-size:12.5px;line-height:15px;color:#8c8c90">1/8</div>
<div class="a" style="left:840px;top:450.6px;width:118px;height:4.2px;border-radius:2.1px;background:#3b3c40"></div>
<div class="a" style="left:840px;top:450.6px;width:14.5px;height:4.2px;border-radius:2.1px;background:#b6ecb0"></div>

</body></html>
